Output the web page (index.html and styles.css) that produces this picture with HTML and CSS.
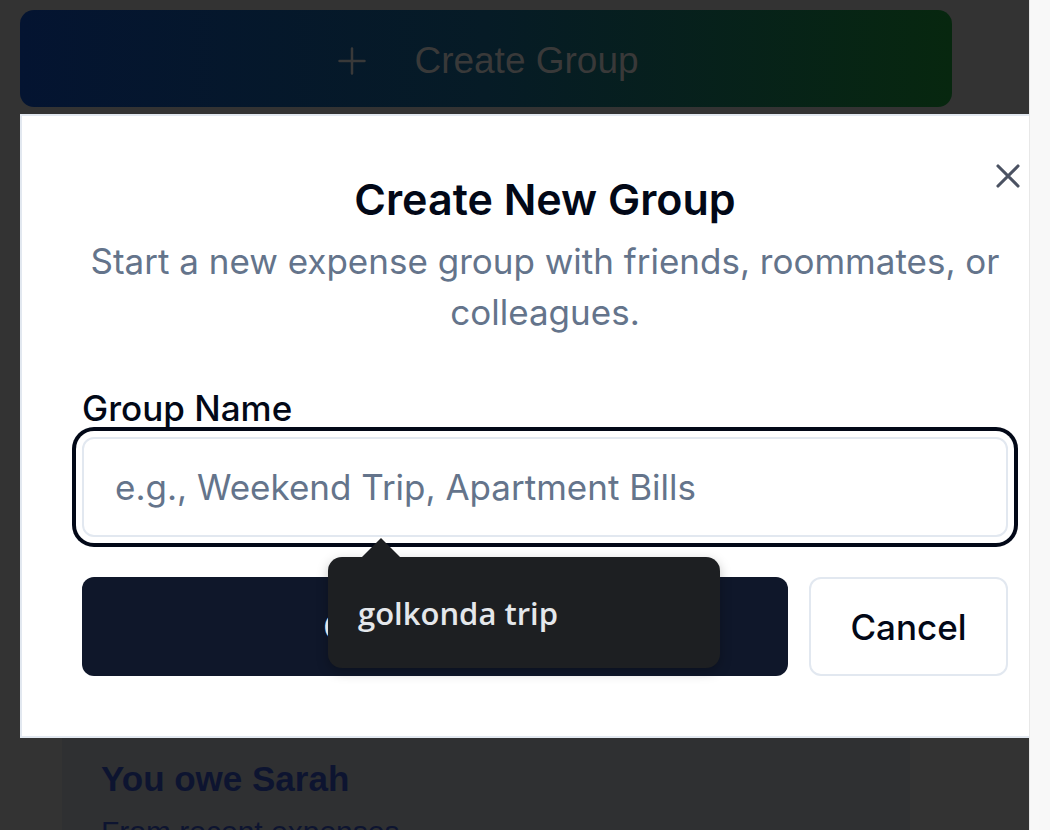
FILE: index.html
```html
<!DOCTYPE html>
<html lang="en">
<head>
<meta charset="utf-8">
<title>Create New Group</title>
<link rel="stylesheet" href="styles.css">
</head>
<body>
<div class="viewport">
  <main class="page">
    <div class="page-inner">
      <button class="cg-button" type="button">
        <svg class="cg-plus" viewBox="0 0 24 24" width="30" height="30" aria-hidden="true"><path d="M12 2v20M2 12h20" fill="none" stroke="currentColor" stroke-width="2" stroke-linecap="round"/></svg>
        <span>Create Group</span>
      </button>
      <section class="owe-card">
        <h2 class="owe-title">You owe Sarah</h2>
        <p class="owe-sub">From recent expenses</p>
      </section>
    </div>

    <div class="modal" role="dialog">
      <button class="modal-close" type="button" aria-label="Close">
        <svg viewBox="0 0 24 24" width="40" height="40" aria-hidden="true"><path d="M18 6 6 18M6 6l12 12" fill="none" stroke="currentColor" stroke-width="1.9" stroke-linecap="round" stroke-linejoin="round"/></svg>
      </button>
      <h1 class="modal-title">Create New Group</h1>
      <p class="modal-desc">Start a new expense group with friends, roommates, or colleagues.</p>
      <label class="field-label" for="gname">Group Name</label>
      <input class="field-input" id="gname" type="text" placeholder="e.g., Weekend Trip, Apartment Bills">
      <div class="modal-actions">
        <button class="btn btn-primary" type="button">Create Group</button>
        <button class="btn btn-outline" type="button">Cancel</button>
      </div>
    </div>

    <div class="autofill">
      <span>golkonda trip</span>
    </div>
  </main>
  <div class="scroll-track"></div>
</div>
</body>
</html>
```

FILE: styles.css
```css
* { box-sizing: border-box; }

html, body {
  margin: 0;
  padding: 0;
  height: 830px;
  overflow: hidden;
  font-family: "Inter", "Liberation Sans", sans-serif;
}

.viewport {
  display: flex;
  height: 830px;
}

.page {
  flex: 1;
  position: relative;
  overflow: hidden;
  background: #333333;
}

.page-inner {
  display: flex;
  flex-direction: column;
  padding: 10px 77px 0 20px;
}

.cg-button {
  display: flex;
  align-items: center;
  justify-content: center;
  gap: 47px;
  height: 97px;
  border: 0;
  border-radius: 14px;
  background: linear-gradient(90deg, #041431 0%, #061b26 50%, #07270f 100%);
  color: #393939;
  font-family: "Liberation Sans", Arial, sans-serif;
  font-size: 37px;
  padding: 4px 0 0 4px;
}

.cg-plus { color: #393939; }

.owe-card {
  margin: 621px 42px 0 42px;
  padding: 0 39px;
  background: #2f3032;
  border-radius: 12px;
  height: 200px;
  font-family: "Liberation Sans", Arial, sans-serif;
}

.owe-title {
  margin: 0;
  padding-top: 31px;
  font-size: 35px;
  line-height: 40px;
  font-weight: 700;
  color: #0d1430;
}

.owe-sub {
  margin: 16px 0 0;
  font-size: 30px;
  color: #0d1430;
}

.modal {
  position: absolute;
  left: 20px;
  top: 114px;
  width: 1050px;
  display: flex;
  flex-direction: column;
  background: #ffffff;
  border: 2px solid #e2e8f0;
  padding: 57px 60px 60px;
}

.modal-close {
  position: absolute;
  left: 966px;
  top: 40px;
  padding: 0;
  border: 0;
  background: none;
  color: #4b5262;
  width: 40px;
  height: 40px;
}

.modal-close svg { display: block; }

.modal-title {
  margin: 0;
  text-align: center;
  font-size: 43px;
  line-height: 52px;
  font-weight: 600;
  color: #020817;
}

.modal-desc {
  margin: 11px 0 0;
  text-align: center;
  font-size: 35px;
  line-height: 51px;
  color: #64748b;
}

.field-label {
  margin-top: 49px;
  font-size: 35px;
  line-height: 42px;
  font-weight: 500;
  color: #020817;
}

.field-input {
  margin-top: 8px;
  height: 100px;
  width: 100%;
  border: 2px solid #e2e8f0;
  border-radius: 12px;
  padding: 0 31px;
  font-family: "Inter", sans-serif;
  font-size: 35px;
  color: #020817;
  background: #ffffff;
  outline: none;
  box-shadow: 0 0 0 6px #ffffff, 0 0 0 10px #020817;
}

.field-input::placeholder { color: #64748b; }

.modal-actions {
  display: flex;
  gap: 21px;
  margin-top: 40px;
}

.btn {
  height: 99px;
  border-radius: 12px;
  font-family: "Inter", sans-serif;
  font-size: 35px;
  font-weight: 500;
}

.btn-primary {
  flex: 1;
  border: 0;
  background: #0f172a;
  color: #ffffff;
}

.btn-outline {
  width: 199px;
  border: 2px solid #e2e8f0;
  background: #ffffff;
  color: #020817;
}

.autofill {
  position: absolute;
  left: 328px;
  top: 557px;
  width: 392px;
  height: 111px;
  display: flex;
  align-items: center;
  padding: 0 0 0 30px;
  background: #1d1f22;
  border-radius: 14px;
  box-shadow: 0 4px 12px rgba(0, 0, 0, 0.25);
  color: #e4e7eb;
  font-family: "Open Sans", "Noto Sans", sans-serif;
  font-size: 31px;
  font-weight: 600;
}

.autofill::before {
  content: "";
  position: absolute;
  left: 34px;
  top: -19px;
  border-left: 19px solid transparent;
  border-right: 19px solid transparent;
  border-bottom: 19px solid #1d1f22;
}

.scroll-track {
  width: 21px;
  flex: none;
  background: #f8f8f8;
  border-left: 1px solid #e8e8e8;
}
```
